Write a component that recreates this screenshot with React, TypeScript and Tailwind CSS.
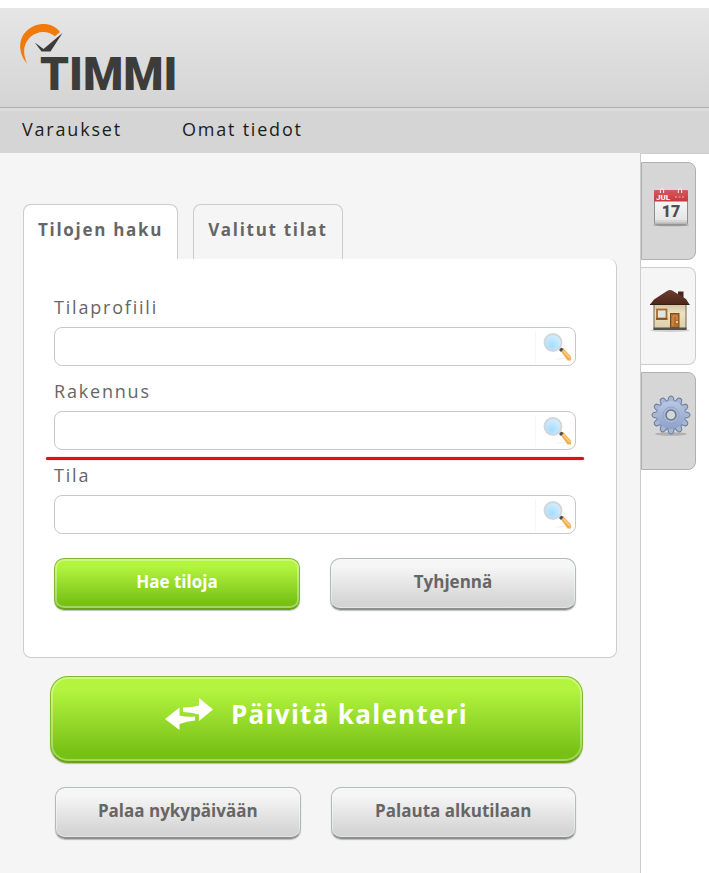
import type { ButtonHTMLAttributes, ReactNode } from "react";
import { useId, useState } from "react";

function Logo() {
  return (
    <a href="#" aria-label="Timmi" className="relative block h-[76px] w-[164px]">
      <svg viewBox="0 0 164 76" className="absolute inset-0 size-full" aria-hidden="true">
        <path
          d="M7.300 39.800C-2 30-2 15 6 7.500C16-2.500 32-2.500 40 8L35 12.300C28 6.500 18 6.500 11 12.500C3.500 19 2 29 7.300 39.800Z"
          fill="#f27a0b"
        />
        <path d="M14.800 18.500L23.500 25L42.500 9L30.500 27.500H21.500Z" fill="#3c3c3b" />
      </svg>
      <span className="absolute top-[26px] left-[20px] font-['Roboto',sans-serif] text-[46px] leading-[48px] font-black text-[#3c3c3b]">
        TIMMI
      </span>
    </a>
  );
}

function MagnifierIcon() {
  return (
    <svg viewBox="0 0 30 30" className="size-[30px]" aria-hidden="true">
      <defs>
        <radialGradient id="glass" cx="0.4" cy="0.7" r="0.7">
          <stop offset="0" stopColor="#a5dcfc" />
          <stop offset="1" stopColor="#d4effe" />
        </radialGradient>
      </defs>
      <path d="M12 27.500Q19 25 25 27Z" fill="#f0f0f0" />
      <path d="M18 18L21 16L29 24.500V28.500H25.500Z" fill="#f2ae4e" />
      <path d="M21 18.500L28 26" stroke="#fbd08a" strokeWidth="1.500" />
      <path d="M17 18L19 15.500L21.500 17L19 20Z" fill="#4c4c4c" />
      <circle cx="11" cy="10.500" r="8.500" fill="url(#glass)" stroke="#d3d6d8" strokeWidth="1.800" />
    </svg>
  );
}

function CalendarIcon() {
  return (
    <svg viewBox="0 0 38 44" className="h-11 w-[38px]" aria-hidden="true">
      <defs>
        <linearGradient id="cal-red" x1="0" y1="0" x2="0" y2="1">
          <stop offset="0" stopColor="#d9575a" />
          <stop offset="1" stopColor="#c5393f" />
        </linearGradient>
        <linearGradient id="cal-page" x1="0" y1="0" x2="0" y2="1">
          <stop offset="0" stopColor="#ffffff" />
          <stop offset="1" stopColor="#e2e2e2" />
        </linearGradient>
      </defs>
      <ellipse cx="19" cy="41" rx="18" ry="1.300" fill="#9c9c9c" />
      <rect x="2.500" y="7" width="33" height="33" rx="1" fill="url(#cal-page)" stroke="#8e8e8e" />
      <path d="M3 37H35M3 38.500H35" stroke="#b9b9b9" strokeWidth="0.700" />
      <rect x="2" y="6" width="34" height="11.500" rx="1" fill="url(#cal-red)" />
      <text x="4" y="15.500" fontFamily="Roboto, sans-serif" fontSize="8" fontWeight="900" fill="#fbeaea">JUL</text>
      <path d="M23 13H32" stroke="#e08b8d" strokeWidth="1.500" strokeDasharray="2 1.500" />
      <g fill="none" stroke="#e4e4e4" strokeWidth="1.300">
        <path d="M8.500 9V6a1.500 1.500 0 0 1 3 0V9M26.500 9V6a1.500 1.500 0 0 1 3 0V9" />
      </g>
      <path d="M10 9V6M28 9V6" stroke="#7d6060" />
      <text x="19" y="33" textAnchor="middle" fontFamily="Roboto, sans-serif" fontSize="16" fontWeight="900" fill="#505050">17</text>
    </svg>
  );
}

function HouseIcon() {
  return (
    <svg viewBox="0 0 42 44" className="h-11 w-[42px]" aria-hidden="true">
      <defs>
        <linearGradient id="wall" x1="0" y1="0" x2="0" y2="1">
          <stop offset="0" stopColor="#cdbf9d" />
          <stop offset="0.400" stopColor="#eee2c2" />
          <stop offset="1" stopColor="#dccda7" />
        </linearGradient>
        <linearGradient id="roof" x1="0" y1="0" x2="0" y2="1">
          <stop offset="0" stopColor="#6a3d2e" />
          <stop offset="1" stopColor="#4d261c" />
        </linearGradient>
      </defs>
      <ellipse cx="21" cy="41.500" rx="20" ry="1.500" fill="#cfcfcf" />
      <rect x="5" y="14" width="32" height="26" fill="url(#wall)" stroke="#6f6653" />
      <rect x="4.500" y="38.500" width="33" height="2.500" fill="#55524b" />
      <path d="M29 9V2.500H34.500V12Z" fill="#4a261d" />
      <path d="M1 15.500L5 10.500L18 2Q21 0 24 2L37 10L40.500 15.500Z" fill="url(#roof)" />
      <path d="M1 15.500H40.500" stroke="#3b1c14" />
      <rect x="8" y="20.500" width="9.500" height="9" fill="#dfe4e4" stroke="#a76c31" strokeWidth="1.800" />
      <path d="M7 30H18.500" stroke="#8a501c" strokeWidth="1.800" />
      <rect x="21.500" y="24.500" width="8.500" height="14" fill="#b36d2c" stroke="#80491a" />
      <path d="M24 27H28V31M24 37V27" fill="none" stroke="#d59a55" />
      <circle cx="28" cy="33" r="1" fill="#ffe2a0" />
    </svg>
  );
}

const teeth = [0, 30, 60, 90, 120, 150, 180, 210, 240, 270, 300, 330];

function GearIcon() {
  return (
    <svg viewBox="0 0 42 44" className="h-11 w-[42px]" aria-hidden="true">
      <defs>
        <linearGradient id="gear" x1="0" y1="0" x2="0" y2="1">
          <stop offset="0" stopColor="#b9c8e2" />
          <stop offset="1" stopColor="#8da1c8" />
        </linearGradient>
      </defs>
      <ellipse cx="21" cy="40" rx="16" ry="1.800" fill="#b0b0b0" />
      <g fill="#a5b6d6" stroke="#677997">
        {teeth.map((angle) => (
          <path
            key={angle}
            transform={`rotate(${angle} 21 21)`}
            d="M16.800 8.500Q18.300 6.500 18.500 4Q18.800 2 21 2Q23.200 2 23.500 4Q23.700 6.500 25.200 8.500Z"
          />
        ))}
      </g>
      <circle cx="21" cy="21" r="14" fill="url(#gear)" />
      <circle cx="21" cy="21" r="8" fill="#a9b9d8" stroke="#93a4c5" />
      <circle cx="21" cy="21" r="5" fill="#d6d6d6" stroke="#66758f" strokeWidth="1.500" />
    </svg>
  );
}

function ArrowsIcon() {
  return (
    <svg viewBox="0 0 48 32" className="h-8 w-12" fill="#ffffff" aria-hidden="true">
      <path d="M34 0L48 11.500L34 23V16.500Q26 14 18 14V9.500Q26 10 34 7.500Z" />
      <path d="M14.500 9.500L0 21L14.500 32V26Q22 23 30 22.500V18.500Q22 19.500 14.500 17.500Z" />
    </svg>
  );
}

function SearchField({ label, underlined = false }: { label: string; underlined?: boolean }) {
  const id = useId();
  return (
    <div className="relative">
      <label htmlFor={id} className="mb-[7px] block text-lg leading-[26px] tracking-widest text-[#666666]">
        {label}
      </label>
      <div className="flex h-[39px] items-center rounded-lg border border-[#c8c8c8] bg-white">
        <input id={id} type="text" className="h-full min-w-0 flex-1 rounded-l-lg px-3 text-lg outline-none" />
        <button
          type="button"
          aria-label={`Hae: ${label}`}
          className="flex h-8 w-10 items-center justify-end border-l border-[#f7f7f7] pr-[3px]"
        >
          <MagnifierIcon />
        </button>
      </div>
      {underlined && (
        <div className="absolute -right-2 -bottom-[10px] -left-2 h-[3px] rounded-full bg-[#dd1111] shadow-[0_0_1px_#ee4444]" />
      )}
    </div>
  );
}

const tones = {
  grey: "border-[#b3b8b8] border-b-[#8b8f8f] from-[#f6f6f6] to-[#d5d4d4] text-[#666666] inset-shadow-[0_0_0_1px_#ffffff66]",
  green: "border-[#7fbc2c] border-b-[#69a118] from-[#b3f43e] to-[#77c114] text-white inset-shadow-[0_0_0_2px_#ffffff55]",
};

const sizes = {
  normal: "h-[52px] rounded-[10px] border-b-2 pb-1 text-[17px]",
  large: "h-[87px] rounded-[18px] border-b-2 pb-2.5 text-[26px] tracking-wider",
};

interface GlossyButtonProps extends ButtonHTMLAttributes<HTMLButtonElement> {
  tone?: keyof typeof tones;
  size?: keyof typeof sizes;
  children: ReactNode;
}

function GlossyButton({ tone = "grey", size = "normal", children, ...rest }: GlossyButtonProps) {
  return (
    <button
      type="button"
      className={`flex w-full items-center justify-center gap-[18px] border bg-linear-to-b from-15% to-90% font-bold shadow-[0_1px_1px_#00000040] ${tones[tone]} ${sizes[size]}`}
      {...rest}
    >
      {children}
    </button>
  );
}

const sideTabs = [
  { name: "Kalenteri", icon: <CalendarIcon />, active: false },
  { name: "Etusivu", icon: <HouseIcon />, active: true },
  { name: "Asetukset", icon: <GearIcon />, active: false },
];

const tabs = ["Tilojen haku", "Valitut tilat"];

export default function App() {
  const [current, setCurrent] = useState(0);

  return (
    <div className="flex min-h-screen flex-col bg-white pt-2 font-['Open_Sans',sans-serif]">
      <header>
        <div className="h-[99px] bg-linear-to-b from-[#e6e6e6] to-[#d4d4d4] px-5 pt-4">
          <Logo />
        </div>
        <nav className="flex h-[46px] items-center gap-[60px] border-t border-[#b0b0b0] bg-[#d5d5d5] px-[22px] pb-1 text-lg tracking-widest text-[#1c1c1c] inset-shadow-[0_3px_0_#dcdcdc]">
          <a href="#">Varaukset</a>
          <a href="#">Omat tiedot</a>
        </nav>
      </header>

      <div className="flex flex-1">
        <main className="flex-1 border-r border-[#cccccc] bg-[#f5f5f5] pt-[51px] pr-[23px] pb-8 pl-[23px]">
          <div role="tablist" className="flex gap-[15px]">
            {tabs.map((tab, index) => (
              <button
                key={tab}
                type="button"
                role="tab"
                aria-selected={index === current}
                onClick={() => setCurrent(index)}
                className={`h-[55px] rounded-t-lg border border-b-0 border-[#cccccc] px-3.5 pb-1 text-[17px] font-bold tracking-widest text-[#666666] ${index === current ? "bg-white" : "bg-[#f5f5f5]"}`}
              >
                {tab}
              </button>
            ))}
          </div>

          <form className="rounded-lg rounded-tl-none border border-t-0 border-[#cccccc] bg-white pt-[35px] pr-10 pb-[47px] pl-[30px]">
            <div className="flex flex-col gap-3">
              <SearchField label="Tilaprofiili" />
              <SearchField label="Rakennus" underlined />
              <SearchField label="Tila" />
            </div>
            <div className="mt-6 grid grid-cols-2 gap-[30px]">
              <GlossyButton tone="green">Hae tiloja</GlossyButton>
              <GlossyButton>Tyhjennä</GlossyButton>
            </div>
          </form>

          <div className="mt-[18px] pr-[34px] pl-[27px]">
            <GlossyButton tone="green" size="large">
              <ArrowsIcon />
              Päivitä kalenteri
            </GlossyButton>
          </div>
          <div className="mt-6 grid grid-cols-2 gap-[30px] pr-[41px] pl-8">
            <GlossyButton>Palaa nykypäivään</GlossyButton>
            <GlossyButton>Palauta alkutilaan</GlossyButton>
          </div>
        </main>

        <aside className="flex w-[68px] shrink-0 flex-col gap-[7px] border-t border-[#cccccc] pt-2">
          {sideTabs.map((tab) => (
            <button
              key={tab.name}
              type="button"
              aria-label={tab.name}
              className={`flex h-[98px] w-[55px] justify-center rounded-r-lg border pt-[21px] pl-1 ${tab.active ? "border-l-0 border-[#cccccc] bg-[#f5f5f5]" : "border-[#b0b0b0] bg-[#d6d6d6]"}`}
            >
              {tab.icon}
            </button>
          ))}
        </aside>
      </div>
    </div>
  );
}
